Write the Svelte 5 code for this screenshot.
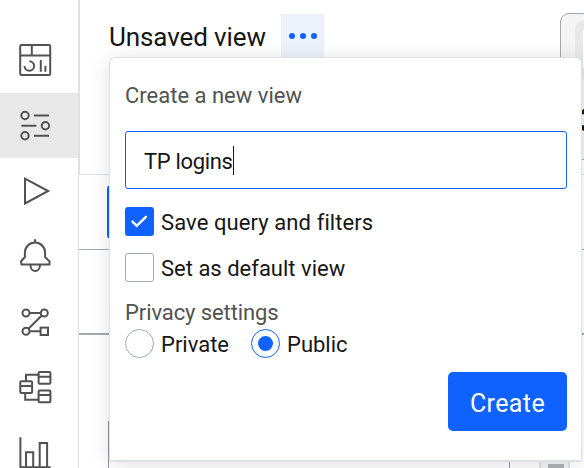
<script>
  let name = $state('TP logins');
  let saveQuery = $state(true);
  let isDefault = $state(false);
  let privacy = $state('Public');

  const items = ['dashboards', 'filters', 'run', 'alerts', 'flows', 'schema', 'reports'];
</script>

<div class="app">
  <nav class="rail">
    {#each items as item}
      <div class="item" class:active={item === 'filters'}>
        <svg width="40" height="40" viewBox="0 0 40 40" aria-label={item}>
          {#if item === 'dashboards'}
            <rect x="5.2" y="5" width="30" height="30" rx="1.2" />
            <path d="M5.2 15.5h30M16.8 5v10.5M14.3 21.2a4.8 4.8 0 1 1-4.8 4.8M25.8 20v11.7M30.4 25.7v6" />
          {:else if item === 'filters'}
            <circle cx="10" cy="9.5" r="3.7" />
            <circle cx="30.4" cy="19.8" r="3.7" />
            <circle cx="10" cy="29.8" r="3.7" />
            <path d="M19 9.5h15M6.4 19.8h15M19 29.8h15" />
          {:else if item === 'run'}
            <path d="M10 7.7v24.8L33.2 20z" />
          {:else if item === 'alerts'}
            <path d="M20 3.3v3.2M6.5 28.4h28v-3l-4.4-4.4v-4.4a10.1 10.1 0 0 0-20.2 0V21l-3.9 4.4zM15.6 28.4v1.9a4.6 4.6 0 0 0 9.2 0v-1.9" />
          {:else if item === 'flows'}
            <circle cx="11" cy="11" r="3.5" />
            <circle cx="29.3" cy="11" r="3.5" />
            <circle cx="11" cy="29.3" r="3.5" />
            <rect x="25.6" y="25.6" width="7.4" height="7.4" />
            <path d="M14.5 11h11.3M26.8 13.5L13.5 26.8M14.5 29.3h11" />
          {:else if item === 'schema'}
            <rect x="5.3" y="14.3" width="11.8" height="11.8" rx="1" />
            <rect x="23.6" y="5" width="11.8" height="11.8" rx="1" />
            <rect x="23.6" y="23.4" width="11.8" height="11.8" rx="1" />
            <path d="M5.3 19h11.8M23.6 9.7h11.8M23.6 28h11.8M11 14.3V7.7h12.6M10.2 26v6.7h13.4" />
          {:else}
            <path d="M5.4 4.3v30h30.2M11 34.3V19.2h7.2v15.1M24.7 34.3V10h7.4v24.3" />
          {/if}
        </svg>
      </div>
    {/each}
  </nav>

  <main>
    <header>
      <h1>Unsaved view</h1>
      <button class="more" aria-label="View options"><i></i><i></i><i></i></button>
    </header>
    <div class="band query"></div>
    <div class="band tabs"></div>
    <div class="band content"></div>
  </main>

  <div class="side-card"><div class="inner"><b></b></div><span>3</span></div>
  <div class="blue-edge"></div>
  <div class="table-edge"></div>
  <div class="scroller"><i></i></div>

  <section class="popover">
    <h2>Create a new view</h2>
    <div class="field"><span class="value">{name}</span><span class="caret"></span></div>
    <button class="option first" onclick={() => (saveQuery = !saveQuery)}>
      <span class="box" class:on={saveQuery}>
        {#if saveQuery}<svg width="29" height="29" viewBox="0 0 29 29"><path d="M7.5 14.6l4.2 4.2 9.2-9" /></svg>{/if}
      </span>
      <span class="label t-save">Save query and filters</span>
    </button>
    <button class="option second" onclick={() => (isDefault = !isDefault)}>
      <span class="box" class:on={isDefault}></span>
      <span class="label">Set as default view</span>
    </button>
    <h3>Privacy settings</h3>
    <div class="radios">
      {#each ['Private', 'Public'] as choice}
        <button class="option" onclick={() => (privacy = choice)}>
          <span class="radio" class:on={privacy === choice}></span>
          <span class="label">{choice}</span>
        </button>
      {/each}
    </div>
    <button class="create">Create</button>
  </section>
</div>

<style>
  .app {
    position: relative;
    display: flex;
    width: 584px;
    height: 468px;
    overflow: hidden;
    background: #fff;
    color: #161616;
    font-family: Roboto, 'Liberation Sans', sans-serif;
  }
  .app * { box-sizing: border-box; }
  h1, h2, h3 { margin: 0; font-weight: 400; white-space: nowrap; }
  button { padding: 0; border: 0; background: none; font: inherit; color: inherit; }
  .rail {
    flex: none;
    width: 79px;
    height: 468px;
    padding-top: 27.4px;
    border-right: 1px solid #dde1e6;
    overflow: hidden;
  }
  .item { display: flex; align-items: center; height: 65.45px; padding-left: 15px; }
  .item.active { background: #e8e8e8; }
  .item svg { fill: none; stroke: #525252; stroke-width: 2; }
  main { flex: 1; min-width: 0; }
  header {
    display: flex;
    height: 175px;
    padding: 14px 0 0 29px;
    border-left: 1px solid #dde1e6;
    border-bottom: 1px solid #dde1e6;
  }
  h1 { width: 172px; font-size: 26px; line-height: 46px; letter-spacing: -0.1px; }
  .more {
    display: flex;
    align-items: center;
    justify-content: center;
    gap: 5px;
    width: 43px;
    height: 43px;
    background: #edf1fa;
  }
  .more i { width: 6px; height: 6px; border-radius: 50%; background: #0f62fe; }
  .band.query { height: 75px; border-bottom: 1px solid #a2a9b0; }
  .band.tabs { height: 85px; border-bottom: 2px solid #a2a9b0; }
  .side-card {
    position: absolute;
    left: 560px;
    top: 13px;
    width: 40px;
    height: 147px;
    border: 1px solid #a2a9b0;
    border-radius: 9px 0 0 0;
    background: #f4f4f4;
  }
  .inner { width: 30px; height: 58px; margin: 7px 0 0 14px; padding: 9px 0 0 8px; border-radius: 7px 0 0; background: #e8e8e8; }
  .inner b { display: block; height: 39px; border-radius: 3px; background: #fff; }
  .side-card span { position: absolute; left: 18px; top: 88px; font-size: 33px; font-weight: 500; line-height: 38px; }
  .blue-edge { position: absolute; left: 107px; top: 185px; width: 20px; height: 54px; border-radius: 4px; background: #0f62fe; }
  .table-edge { position: absolute; left: 108px; top: 421px; width: 402px; height: 50px; border: 1px solid #8d96a3; border-top: 0; }
  .scroller { position: absolute; left: 539px; top: 460px; width: 31px; height: 9px; padding: 3px 0 0 7px; background: #f4f4f4; border: 1px solid #dde1e6; border-width: 1px 2px; }
  .scroller i { display: block; width: 16px; height: 5px; background: #b1b3b5; }
  .popover {
    position: absolute;
    left: 109px;
    top: 57px;
    width: 473px;
    height: 405px;
    padding: 23px 14px 0 15px;
    display: flex;
    flex-direction: column;
    border: 1px solid #dde1e6;
    border-bottom-width: 2px;
    border-radius: 6px 6px 2px 2px;
    background: #fff;
    box-shadow: 0 2px 20px rgba(0, 0, 0, 0.12);
    font-size: 22px;
  }
  h2 { height: 30px; font-size: 22px; line-height: 30px; color: #525252; }
  .field {
    display: flex;
    align-items: center;
    height: 58px;
    margin-top: 20px;
    padding-left: 18px;
    border: 1px solid #0f62fe;
    border-radius: 3px;
    white-space: pre;
  }
  .value { padding-top: 2px; letter-spacing: -0.33px; }
  .caret { width: 1px; height: 29px; background: #161616; }
  .option { display: flex; align-items: center; gap: 7px; height: 29px; line-height: 29px; white-space: nowrap; }
  .label { padding-top: 2px; }
  .t-save { letter-spacing: 0.09px; }
  .first { margin-top: 18px; }
  .second { margin-top: 17px; }
  .box { flex: none; width: 29px; height: 29px; border: 1px solid #a2a9b0; border-radius: 3px; }
  .box.on { border: 0; background: #0f62fe; }
  .box svg { display: block; fill: none; stroke: #fff; stroke-width: 2.5; stroke-linecap: round; }
  h3 { height: 28px; margin-top: 17px; font-size: 22px; line-height: 28px; letter-spacing: -0.1px; color: #525252; }
  .radios { display: flex; margin-top: 2px; }
  .radios .option { width: 126px; }
  .radio { display: grid; place-items: center; flex: none; width: 29px; height: 29px; border: 1px solid #a2a9b0; border-radius: 50%; }
  .radio.on { border-color: #0f62fe; }
  .radio.on::before { content: ''; width: 15px; height: 15px; border-radius: 50%; background: #0f62fe; }
  .create { align-self: flex-end; width: 119px; height: 59px; margin-top: 14px; border-radius: 5px; background: #0f62fe; color: #fff; font-size: 25px; line-height: 63px; letter-spacing: 0.4px; }
</style>
